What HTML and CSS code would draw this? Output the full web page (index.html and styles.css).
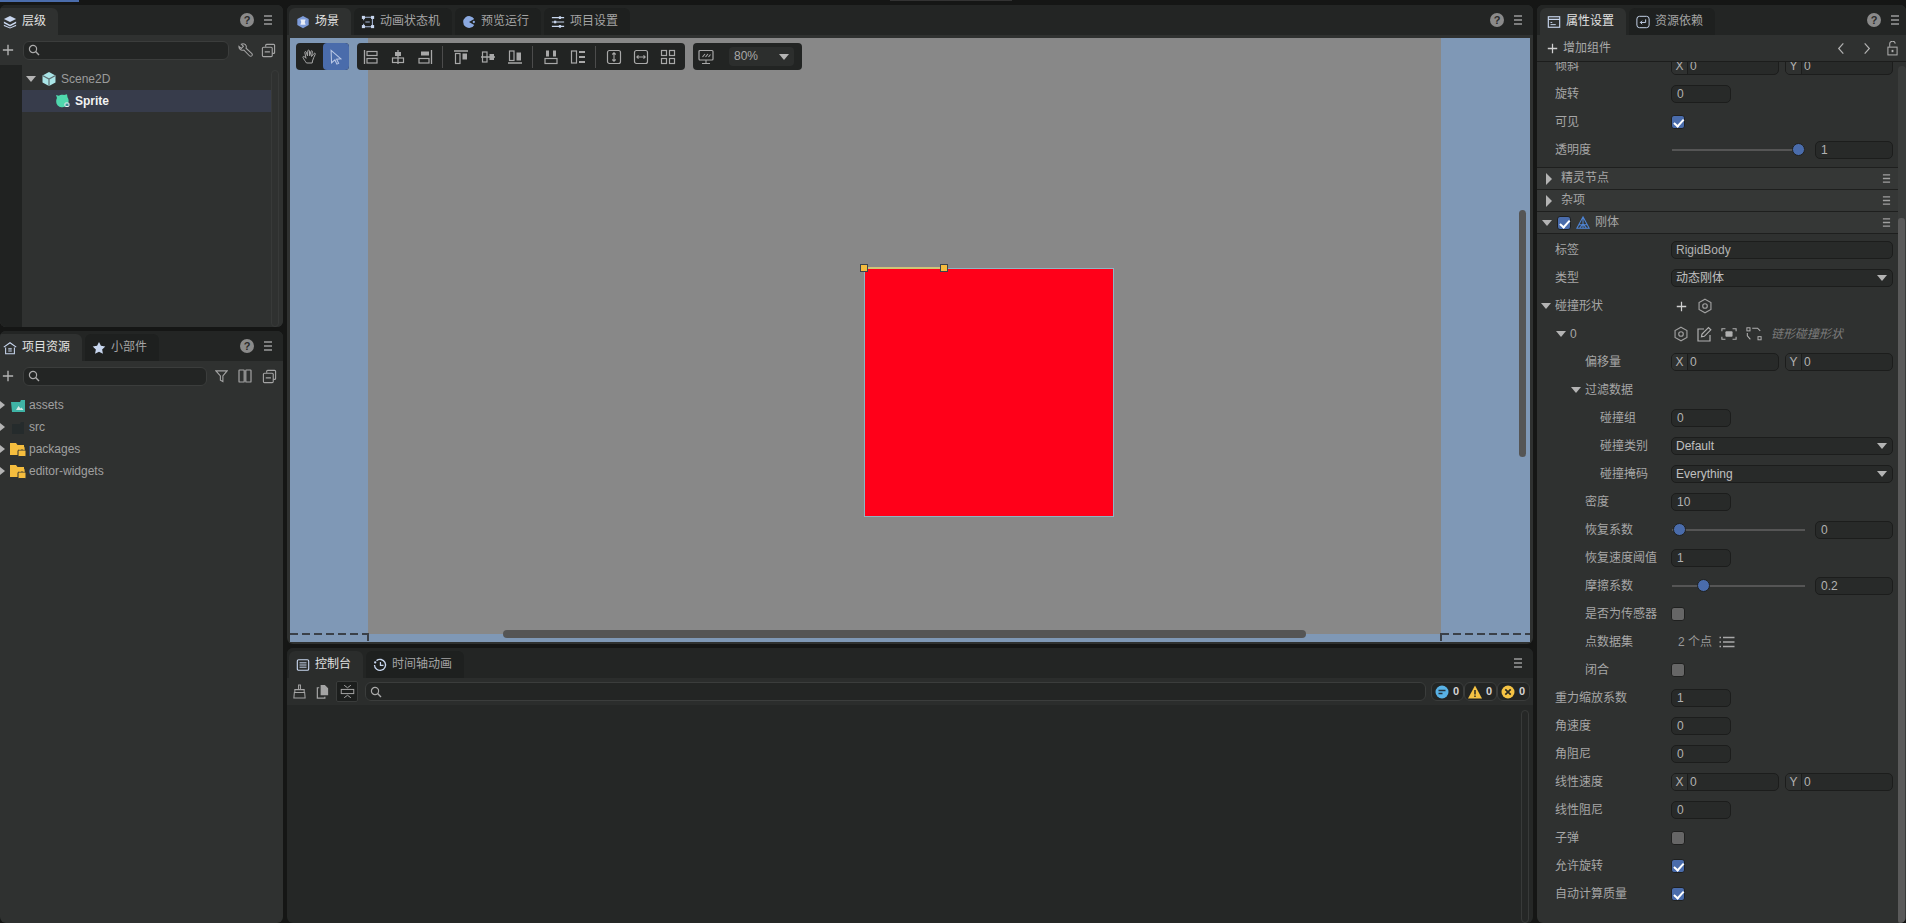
FILE: index.html
```html
<!DOCTYPE html>
<html lang="zh">
<head>
<meta charset="utf-8">
<title>LayaAir IDE</title>
<link rel="stylesheet" href="styles.css">
</head>
<body>
<svg class="defs" aria-hidden="true">
  <defs>
    <symbol id="menu" viewBox="0 0 10 12"><path d="M1 2h8M1 6h8M1 10h8" stroke-width="1.6"/></symbol>
    <symbol id="plus" viewBox="0 0 14 14"><path d="M7 1v12M1 7h12" stroke-width="1.6"/></symbol>
    <symbol id="search" viewBox="0 0 12 12"><circle cx="5" cy="5" r="3.6" stroke-width="1.2"/><path d="M7.6 7.6l3.4 3.4" stroke-width="1.4"/></symbol>
    <symbol id="wrench" viewBox="0 0 16 16"><path d="M1 3.500L3.500 5.800 5.800 3.500 3.500 1.200C5.500.2 8 1 8.700 3c.3.900.2 1.800-.1 2.600l6 5.400c.8.800.8 1.800.2 2.600-.7.800-1.800.8-2.600 0L6.300 7.500C4.800 8 3.100 7.700 2 6.500 1.200 5.600.9 4.500 1 3.500z" stroke-width="1.100"/></symbol>
    <symbol id="collapse" viewBox="0 0 16 16"><path d="M5 4V2.500A1 1 0 0 1 6 1.500h7.500a1 1 0 0 1 1 1V10a1 1 0 0 1-1 1H12" stroke-width="1.200"/><rect x="1.500" y="4.500" width="10.500" height="10" rx="1.200" stroke-width="1.200"/><path d="M4 9.500h5.500" stroke-width="1.200"/></symbol>
    <symbol id="filter" viewBox="0 0 14 14"><path d="M1 1.500h12L8.500 7v6L5.800 11.500V7z" stroke-width="1.200"/></symbol>
    <symbol id="cols" viewBox="0 0 14 14"><rect x="1" y="1" width="5.200" height="12" rx=".6" stroke-width="1.200"/><rect x="7.800" y="1" width="5.200" height="12" rx=".6" stroke-width="1.200"/></symbol>
    <symbol id="cube" viewBox="0 0 16 16"><path class="solid-mint" d="M8 1l6.500 3.500v7L8 15l-6.500-3.500v-7z"/><path d="M1.500 4.500L8 8l6.500-3.500M8 8v7" stroke="#5d6e70" stroke-width="1.200"/></symbol>
    <symbol id="sprite" viewBox="0 0 16 16"><path class="solid-green" d="M1 2l3 .8C5 2 7 1.600 9 2l3-.8.5 3c1.500 2 1.500 5 .2 7-1.200 2-3.700 3.300-6.200 3C3.500 14 1.200 11.500 1.200 8.500c0-1.500.3-2.500.8-3.500z"/><rect x="10" y="10" width="4" height="3.500" rx=".8" fill="#3d8f98"/></symbol>
    <symbol id="hex" viewBox="0 0 14 14"><path d="M7 1l5.200 3v6L7 13l-5.200-3V4z" stroke-width="1"/><circle cx="7" cy="7" r="2" stroke-width="1"/></symbol>
    <symbol id="edit" viewBox="0 0 16 16"><path d="M8 3H2v12h12V9" stroke-width="1.200"/><path d="M5.500 10.800L6 8l6.500-6.500 2.300 2.300L8.300 10.300z" stroke-width="1.200"/></symbol>
    <symbol id="frame" viewBox="0 0 18 16"><path d="M1 5V2h4M13 2h4v3M17 11v3h-4M5 14H1v-3" stroke-width="1.200"/><rect x="5" y="5" width="8" height="6" rx="1" class="solid-cur"/></symbol>
    <symbol id="nodes" viewBox="0 0 18 16"><rect x="1" y="1" width="3.500" height="3.500" stroke-width="1.100"/><rect x="13.500" y="11" width="3.500" height="3.500" stroke-width="1.100"/><path d="M7 1.500h6l3 3M1.500 7v3l3 3.500h.5" stroke-width="1.200"/></symbol>
    <symbol id="list" viewBox="0 0 16 12"><path d="M4 1.500h11.500M4 6h11.500M4 10.500h11.500M.5 1.500h1.500M.5 6h1.500M.5 10.500h1.500" stroke-width="1.500"/></symbol>
    <symbol id="lock" viewBox="0 0 12 16"><path d="M3 6V3.500a3 3 0 0 1 6-.8" stroke-width="1.100"/><rect x="1" y="6.500" width="10" height="8.500" stroke-width="1.100"/><rect x="5" y="9.500" width="2" height="2.500" class="solid-cur"/></symbol>
    <symbol id="left" viewBox="0 0 8 14"><path d="M6.500 1.500L1.500 7l5 5.500" stroke-width="1.300"/></symbol>
    <symbol id="right" viewBox="0 0 8 14"><path d="M1.500 1.500l5 5.500-5 5.500" stroke-width="1.300"/></symbol>
    <symbol id="hand" viewBox="0 0 16 16"><path d="M4.500 14c-1-1.500-3-4-3.500-5.500-.3-1 .8-1.500 1.500-.8L4 9.300 2.800 3.500c-.2-1 1.200-1.400 1.500-.3L5.500 7 5.800 1.800c.1-1 1.500-1 1.600 0l.3 5L9 2.300c.3-1 1.600-.6 1.400.4L9.500 7.500l2.500-3c.7-.8 1.800 0 1.200.9-1 2-2 4-2.700 6.600L10.200 14z" stroke-width="1"/></symbol>
    <symbol id="arrow" viewBox="0 0 16 18"><path d="M2.500 1.500l11 9.500-4.800.5L11 16l-2 1-2.200-4.700L3 15.500z" stroke-width="1.200"/></symbol>
    <symbol id="a1" viewBox="0 0 16 16"><path d="M1.500 1v14" stroke-width="1.300"/><rect x="4" y="2.500" width="10" height="4" stroke-width="1.200"/><rect x="4" y="9.500" width="10" height="4.500" stroke-width="1.200"/></symbol>
    <symbol id="a2" viewBox="0 0 16 16"><path d="M8 1v14" stroke-width="1.300"/><rect x="5" y="3" width="6" height="4" class="solid-cur"/><rect x="2.500" y="9" width="11" height="4.500" stroke-width="1.200"/></symbol>
    <symbol id="a3" viewBox="0 0 16 16"><path d="M14.500 1v14" stroke-width="1.300"/><rect x="4" y="2.500" width="8" height="4" class="solid-cur"/><rect x="2" y="9.500" width="10" height="4.500" stroke-width="1.200"/></symbol>
    <symbol id="a4" viewBox="0 0 16 16"><path d="M1 2h14" stroke-width="1.300"/><rect x="2.500" y="4.500" width="4.500" height="10" stroke-width="1.200"/><rect x="9.500" y="4.500" width="4.500" height="6" class="solid-cur"/></symbol>
    <symbol id="a5" viewBox="0 0 16 16"><path d="M1 8h14" stroke-width="1.300"/><rect x="2.500" y="3" width="4.500" height="10" stroke-width="1.200"/><rect x="9.500" y="5" width="4.500" height="6" class="solid-cur"/></symbol>
    <symbol id="a6" viewBox="0 0 16 16"><path d="M1 14h14" stroke-width="1.300"/><rect x="2.500" y="2" width="4.500" height="9.500" stroke-width="1.200"/><rect x="9.500" y="3.500" width="4.500" height="8" class="solid-cur"/></symbol>
    <symbol id="a7" viewBox="0 0 16 16"><rect x="2" y="9.500" width="12" height="5" stroke-width="1.200"/><path d="M3 1v6h3V1M10 1v6h3V1" stroke-width="0"/><rect x="3" y="1.500" width="3" height="6" class="solid-cur"/><rect x="10" y="1.500" width="3" height="6" class="solid-cur"/></symbol>
    <symbol id="a8" viewBox="0 0 16 16"><rect x="1.500" y="2" width="5" height="12" stroke-width="1.200"/><path d="M9 3h6M9 8h6M9 13h6" stroke-width="2"/></symbol>
    <symbol id="a9" viewBox="0 0 16 16"><rect x="1.500" y="1.500" width="13" height="13" rx="2" stroke-width="1.200"/><path d="M8 4v8M6.300 5.500L8 3.800l1.700 1.700M6.300 10.500L8 12.200l1.700-1.700" stroke-width="1.100"/></symbol>
    <symbol id="a10" viewBox="0 0 16 16"><rect x="1.500" y="1.500" width="13" height="13" rx="2" stroke-width="1.200"/><path d="M4 8h8M5.500 6.300L3.800 8l1.700 1.700M10.500 6.300L12.200 8l-1.700 1.700" stroke-width="1.100"/></symbol>
    <symbol id="a11" viewBox="0 0 16 16"><rect x="1.500" y="1.500" width="5" height="5" stroke-width="1.200"/><rect x="9.500" y="1.500" width="5" height="5" stroke-width="1.200"/><rect x="1.500" y="9.500" width="5" height="5" stroke-width="1.200"/><rect x="9.500" y="9.500" width="5" height="5" stroke-width="1.200"/></symbol>
    <symbol id="monitor" viewBox="0 0 16 16"><rect x="1" y="1.500" width="14" height="9.500" rx="1" stroke-width="1.200"/><path d="M8 11v3M4 14.500h8M4.500 8l2.500-3M7.500 8L10 5M10.500 8l2-2.500" stroke-width="1.100"/></symbol>
    <symbol id="broom" viewBox="0 0 16 16"><path d="M7 1h2v5H7zM3 6h10v3H3zM2.500 9h11l.5 6H2z" stroke-width="1.100"/></symbol>
    <symbol id="doc" viewBox="0 0 14 16"><path class="solid-cur" d="M5 1h4.500L13 4.500V12H5z"/><path d="M3.500 4H1.500v11h8v-1.500" stroke-width="1.300"/></symbol>
    <symbol id="fit" viewBox="0 0 18 18"><rect x="1.500" y="6.500" width="15" height="5" stroke-width="1.200"/><path d="M5 1.500L9 4.500l4-3M5 16.500l4-3 4 3" stroke-width="1.200"/></symbol>
  </defs>
</svg>

<div class="topstrip"><div class="topstrip-mark"></div><div class="topstrip-tab"></div></div>

<div class="app">
  <div class="col">
    <section class="panel hierarchy">
      <header class="tabbar flush">
        <div class="tab active">
          <svg class="tabicon" viewBox="0 0 16 16"><path class="solid-pale" d="M8 1l7 3.500L8 8 1 4.500z"/><path class="solid-pale" d="M1 7.500L8 11l7-3.500v1.800L8 13 1 9.300zM1 11l7 3.300L15 11v1.500L8 15.500 1 12.500z"/></svg>
          <span>层级</span>
        </div>
        <div class="tab-tools">
          <span class="help">?</span>
          <svg class="ic menu"><use href="#menu"/></svg>
        </div>
      </header>
      <div class="toolbar">
        <svg class="ic add"><use href="#plus"/></svg>
        <div class="search grow"><svg class="ic mag"><use href="#search"/></svg></div>
        <svg class="ic tool first"><use href="#wrench"/></svg>
        <svg class="ic tool"><use href="#collapse"/></svg>
      </div>
      <div class="tree-area">
        <div class="gutter"></div>
        <div class="tree">
          <div class="node scene-node">
            <i class="caret down"></i>
            <svg class="ic node-ic"><use href="#cube"/></svg>
            <span>Scene2D</span>
          </div>
          <div class="node sprite-node">
            <svg class="ic node-ic"><use href="#sprite"/></svg>
            <span>Sprite</span>
          </div>
        </div>
        <div class="track"></div>
      </div>
    </section>

    <section class="panel assets">
      <header class="tabbar flush">
        <div class="tab active">
          <svg class="tabicon" viewBox="0 0 16 16"><path class="solid-pale" d="M8 1l7.500 5.500-.8 1L8 2.800 1.300 7.500l-.8-1z"/><path d="M3 7.500v7h10v-7M3 14.500h10M6 9h4M6 11.500h4" stroke="#c8d6ee" stroke-width="1.200" fill="none"/></svg>
          <span>项目资源</span>
        </div>
        <div class="tab">
          <svg class="tabicon" viewBox="0 0 16 16"><path class="solid-pale" d="M8 1l2.200 4.500 5 .7-3.600 3.500.9 5L8 12.300 3.500 14.700l.9-5L.8 6.200l5-.7z"/></svg>
          <span>小部件</span>
        </div>
        <div class="tab-tools">
          <span class="help">?</span>
          <svg class="ic menu"><use href="#menu"/></svg>
        </div>
      </header>
      <div class="toolbar assets-bar">
        <svg class="ic add"><use href="#plus"/></svg>
        <div class="search grow"><svg class="ic mag"><use href="#search"/></svg></div>
        <svg class="ic tool small"><use href="#filter"/></svg>
        <svg class="ic tool cols"><use href="#cols"/></svg>
        <svg class="ic tool wide-gap"><use href="#collapse"/></svg>
      </div>
      <div class="files">
        <div class="file"><i class="caret side"></i>
          <svg class="file-ic" viewBox="0 0 16 16"><path fill="#3fb4a6" d="M1 5h9l1-2h4v12H2z"/><path fill="#cfe9e4" d="M6 13l2.500-4 2 2.500 1-1 2 2.500z"/></svg>
          <span>assets</span></div>
        <div class="file"><i class="caret side"></i>
          <svg class="file-ic" viewBox="0 0 16 16"><path fill="#252b2c" d="M2 5h8l1-2h3v12H2z"/></svg>
          <span>src</span></div>
        <div class="file"><i class="caret side"></i>
          <svg class="file-ic" viewBox="0 0 16 16"><path fill="#f5bd3e" d="M0 2h6l1.500 2H14v10H0z"/><rect x="8" y="9" width="8" height="6.500" rx="1" fill="#f5bd3e" stroke="#2f3130"/><path d="M10 9V7.500a2 2 0 0 1 4 0V9" stroke="#f5bd3e" fill="none" stroke-width="1.300"/></svg>
          <span>packages</span></div>
        <div class="file"><i class="caret side"></i>
          <svg class="file-ic" viewBox="0 0 16 16"><path fill="#f5bd3e" d="M0 2h6l1.500 2H14v10H0z"/><rect x="8" y="9" width="8" height="6.500" rx="1" fill="#f5bd3e" stroke="#2f3130"/><path d="M10 9V7.500a2 2 0 0 1 4 0V9" stroke="#f5bd3e" fill="none" stroke-width="1.300"/></svg>
          <span>editor-widgets</span></div>
      </div>
    </section>
  </div>

  <div class="col">
    <section class="panel scene">
      <header class="tabbar">
        <div class="tab active">
          <svg class="tabicon" viewBox="0 0 16 16"><path fill="#7d9bd8" d="M8 1l6.500 3.500v7L8 15l-6.500-3.500v-7z"/><path fill="#e8edf6" d="M5 5h6l-1 3 1 3H5l1-3z"/></svg>
          <span>场景</span>
        </div>
        <div class="tab">
          <svg class="tabicon" viewBox="0 0 16 16"><path d="M3 2.500h10M3 13.500h10M13 3v10M3 3v3M3 10v3M5 8h5" stroke="#a8b8d8" stroke-width="1.200" fill="none"/><rect x="1" y="1" width="3.500" height="3.500" fill="#c8d6ee"/><rect x="11.500" y="1" width="3.500" height="3.500" fill="#c8d6ee"/><rect x="1" y="11.500" width="3.500" height="3.500" fill="#c8d6ee"/><rect x="11.500" y="11.500" width="3.500" height="3.500" fill="#c8d6ee"/></svg>
          <span>动画状态机</span>
        </div>
        <div class="tab">
          <svg class="tabicon" viewBox="0 0 16 16"><path fill="#8ba9e0" d="M14 4.500A6.800 6.800 0 1 0 14 11.500L8 8z"/><circle cx="13.500" cy="8" r="1.300" fill="#8ba9e0"/></svg>
          <span>预览运行</span>
        </div>
        <div class="tab">
          <svg class="tabicon" viewBox="0 0 16 16"><path d="M1 3h14M1 8h14M1 13h14" stroke="#c8d6ee" stroke-width="1.300"/><rect x="9" y="1.500" width="2.500" height="3" fill="#c8d6ee"/><rect x="3.500" y="6.500" width="2.500" height="3" fill="#c8d6ee"/><rect x="9" y="11.500" width="2.500" height="3" fill="#c8d6ee"/></svg>
          <span>项目设置</span>
        </div>
        <div class="tab-tools">
          <span class="help">?</span>
          <svg class="ic menu"><use href="#menu"/></svg>
        </div>
      </header>
      <div class="viewport">
        <div class="stage"></div>
        <div class="sprite-box"></div>
        <div class="sel-line"></div>
        <span class="handle h1"></span>
        <span class="handle h2"></span>
        <div class="dash d-left"></div>
        <div class="dash d-right"></div>
        <div class="vthumb"></div>
        <div class="hthumb"></div>
        <div class="scene-tools">
          <div class="tgroup pick">
            <span class="tbtn"><svg class="ic ti"><use href="#hand"/></svg></span>
            <span class="tbtn on"><svg class="ic ti"><use href="#arrow"/></svg></span>
          </div>
          <div class="tgroup aligns">
            <span class="tbtn"><svg class="ic ti"><use href="#a1"/></svg></span>
            <span class="tbtn"><svg class="ic ti"><use href="#a2"/></svg></span>
            <span class="tbtn"><svg class="ic ti"><use href="#a3"/></svg></span>
            <i class="tsep"></i>
            <span class="tbtn"><svg class="ic ti"><use href="#a4"/></svg></span>
            <span class="tbtn"><svg class="ic ti"><use href="#a5"/></svg></span>
            <span class="tbtn"><svg class="ic ti"><use href="#a6"/></svg></span>
            <i class="tsep"></i>
            <span class="tbtn"><svg class="ic ti"><use href="#a7"/></svg></span>
            <span class="tbtn"><svg class="ic ti"><use href="#a8"/></svg></span>
            <i class="tsep"></i>
            <span class="tbtn"><svg class="ic ti"><use href="#a9"/></svg></span>
            <span class="tbtn"><svg class="ic ti"><use href="#a10"/></svg></span>
            <span class="tbtn"><svg class="ic ti"><use href="#a11"/></svg></span>
          </div>
          <div class="tgroup zoom">
            <span class="tbtn"><svg class="ic ti"><use href="#monitor"/></svg></span>
            <div class="zoom-select"><span>80%</span><i class="caret down big"></i></div>
          </div>
        </div>
      </div>
    </section>

    <section class="panel console">
      <header class="tabbar">
        <div class="tab active">
          <svg class="tabicon" viewBox="0 0 16 16"><rect x="1.500" y="2" width="13" height="12" rx="1.500" stroke="#c8d6ee" stroke-width="1.300" fill="none"/><path d="M4 5.500h8M4 8h8M4 10.500h8" stroke="#c8d6ee" stroke-width="1.100"/></svg>
          <span>控制台</span>
        </div>
        <div class="tab">
          <svg class="tabicon" viewBox="0 0 16 16"><path d="M4 3a6.300 6.300 0 1 1-2.300 5" stroke="#c8d6ee" stroke-width="1.500" fill="none"/><path d="M8.500 4.500V8.500H12" stroke="#c8d6ee" stroke-width="1.400" fill="none"/><circle cx="2.500" cy="5" r="1.300" fill="#c8d6ee"/></svg>
          <span>时间轴动画</span>
        </div>
        <div class="tab-tools">
          <svg class="ic menu"><use href="#menu"/></svg>
        </div>
      </header>
      <div class="console-bar">
        <svg class="ic cbtn"><use href="#broom"/></svg>
        <svg class="ic cbtn doc"><use href="#doc"/></svg>
        <span class="ctoggle"><svg class="ic cbtn"><use href="#fit"/></svg></span>
        <div class="search grow"><svg class="ic mag"><use href="#search"/></svg></div>
        <div class="badges">
          <span class="badge"><svg viewBox="0 0 14 14" class="badge-ic"><circle cx="7" cy="7" r="6.500" fill="#58b2e6"/><path d="M3.500 5.500h7M3.500 8.500h4" stroke="#26333c" stroke-width="1.500"/></svg>0</span>
          <span class="badge"><svg viewBox="0 0 14 14" class="badge-ic"><path d="M7 .5L14 13.500H0z" fill="#f5c344"/><path d="M7 5v4.500M7 10.500v1.500" stroke="#2a2a22" stroke-width="1.500"/></svg>0</span>
          <span class="badge"><svg viewBox="0 0 14 14" class="badge-ic"><circle cx="7" cy="7" r="6.500" fill="#f5c344"/><path d="M4.300 4.300l5.400 5.400M9.700 4.300l-5.400 5.400" stroke="#2a2a22" stroke-width="1.700"/></svg>0</span>
        </div>
      </div>
      <div class="console-body"><div class="track"></div></div>
    </section>
  </div>

  <section class="panel inspector">
    <header class="tabbar">
      <div class="tab active">
        <svg class="tabicon" viewBox="0 0 16 16"><rect x="1.500" y="2" width="13" height="12" stroke="#c8d6ee" stroke-width="1.300" fill="none"/><path d="M1.500 5h13" stroke="#c8d6ee" stroke-width="1.500"/><path d="M4 8.500h2M4 11h6" stroke="#c8d6ee" stroke-width="1.100"/></svg>
        <span>属性设置</span>
      </div>
      <div class="tab">
        <svg class="tabicon" viewBox="0 0 16 16"><rect x="1" y="1.500" width="14" height="13" rx="3" stroke="#c8d6ee" stroke-width="1.100" fill="none"/><path d="M11 5v3.500H5M7 6.500L5 8.500l2 2" stroke="#c8d6ee" stroke-width="1.100" fill="none"/></svg>
        <span>资源依赖</span>
      </div>
      <div class="tab-tools">
        <span class="help">?</span>
        <svg class="ic menu"><use href="#menu"/></svg>
      </div>
    </header>
    <div class="addbar">
      <svg class="ic addc"><use href="#plus"/></svg>
      <span class="addtext">增加组件</span>
      <span class="spacer"></span>
      <svg class="ic nav"><use href="#left"/></svg>
      <svg class="ic nav nav-r"><use href="#right"/></svg>
      <svg class="ic navlock"><use href="#lock"/></svg>
    </div>
    <div class="props">
      <div class="proplist">
        <div class="row"><span class="lbl">倾斜</span><div class="field xy"><b>X</b><span>0</span></div><div class="field xy"><b>Y</b><span>0</span></div></div>
        <div class="row"><span class="lbl">旋转</span><div class="field short">0</div></div>
        <div class="row"><span class="lbl">可见</span><i class="check on"></i></div>
        <div class="row"><span class="lbl">透明度</span><div class="slider" style="--v:1"><i></i></div><div class="field num">1</div></div>

        <div class="section first"><i class="caret side big"></i><span>精灵节点</span><svg class="ic sec-menu"><use href="#menu"/></svg></div>
        <div class="section"><i class="caret side big"></i><span>杂项</span><svg class="ic sec-menu"><use href="#menu"/></svg></div>
        <div class="section body-sec"><i class="caret down big"></i><i class="check on"></i>
          <svg class="sec-ic" viewBox="0 0 16 16"><path d="M8 1L1 14h14zM8 1v13M4 14l4-5 4 5M3 10h10" stroke="#4f86d8" stroke-width="1.200" fill="none"/></svg>
          <span>刚体</span><svg class="ic sec-menu"><use href="#menu"/></svg></div>

        <div class="row pushed"><span class="lbl">标签</span><div class="field wide">RigidBody</div></div>
        <div class="row"><span class="lbl">类型</span><div class="field wide select">动态刚体<i class="caret down big"></i></div></div>
        <div class="row"><span class="lbl"><i class="caret down"></i>碰撞形状</span>
          <svg class="ic ri plusi"><use href="#plus"/></svg><svg class="ic ri hexi"><use href="#hex"/></svg></div>
        <div class="row"><span class="lbl l-zero"><i class="caret down"></i>0</span>
          <svg class="ic ri ri-first hexi"><use href="#hex"/></svg><svg class="ic ri"><use href="#edit"/></svg><svg class="ic ri"><use href="#frame"/></svg><svg class="ic ri"><use href="#nodes"/></svg>
          <em class="shape">链形碰撞形状</em></div>
        <div class="row"><span class="lbl l1">偏移量</span><div class="field xy"><b>X</b><span>0</span></div><div class="field xy"><b>Y</b><span>0</span></div></div>
        <div class="row"><span class="lbl l1"><i class="caret down"></i>过滤数据</span></div>
        <div class="row"><span class="lbl l2">碰撞组</span><div class="field short">0</div></div>
        <div class="row"><span class="lbl l2">碰撞类别</span><div class="field wide select">Default<i class="caret down big"></i></div></div>
        <div class="row"><span class="lbl l2">碰撞掩码</span><div class="field wide select">Everything<i class="caret down big"></i></div></div>
        <div class="row"><span class="lbl l1">密度</span><div class="field short">10</div></div>
        <div class="row"><span class="lbl l1">恢复系数</span><div class="slider" style="--v:0"><i></i></div><div class="field num">0</div></div>
        <div class="row"><span class="lbl l1">恢复速度阈值</span><div class="field short">1</div></div>
        <div class="row"><span class="lbl l1">摩擦系数</span><div class="slider" style="--v:.2"><i></i></div><div class="field num">0.2</div></div>
        <div class="row"><span class="lbl l1">是否为传感器</span><i class="check"></i></div>
        <div class="row"><span class="lbl l1">点数据集</span><span class="count">2 个点</span><svg class="ic listi"><use href="#list"/></svg></div>
        <div class="row"><span class="lbl l1">闭合</span><i class="check"></i></div>
        <div class="row"><span class="lbl">重力缩放系数</span><div class="field short">1</div></div>
        <div class="row"><span class="lbl">角速度</span><div class="field short">0</div></div>
        <div class="row"><span class="lbl">角阻尼</span><div class="field short">0</div></div>
        <div class="row"><span class="lbl">线性速度</span><div class="field xy"><b>X</b><span>0</span></div><div class="field xy"><b>Y</b><span>0</span></div></div>
        <div class="row"><span class="lbl">线性阻尼</span><div class="field short">0</div></div>
        <div class="row"><span class="lbl">子弹</span><i class="check"></i></div>
        <div class="row"><span class="lbl">允许旋转</span><i class="check on"></i></div>
        <div class="row"><span class="lbl">自动计算质量</span><i class="check on"></i></div>
      </div>
      <div class="inspect-scroll"><div class="inspect-thumb"></div></div>
    </div>
  </section>
</div>
</body>
</html>
```

FILE: styles.css
```css
* { box-sizing: border-box; }
html, body { margin: 0; height: 100%; }
body {
  width: 1906px;
  height: 923px;
  overflow: hidden;
  background: #151615;
  color: #a9a9a9;
  font: 12px/1.2 "Liberation Sans", "Noto Sans CJK SC", sans-serif;
  display: flex;
  flex-direction: column;
}
i, em { display: block; }
.defs { width: 0; height: 0; position: absolute; }
symbol, .ic { fill: none; stroke: currentColor; }
.solid-cur { fill: currentColor; stroke: none; }
.solid-mint { fill: #a9e4e6; stroke: none; }
.solid-green { fill: #4fd8ae; stroke: none; }
.solid-pale { fill: #c8d6ee; stroke: none; }
.ic { flex: none; }

.topstrip { height: 5px; flex: none; display: flex; }
.topstrip-mark { width: 79px; height: 2px; background: #4a6cab; }
.topstrip-tab { width: 122px; height: 1px; margin-left: 811px; background: #333; }

.app {
  flex: 1;
  min-height: 0;
  display: grid;
  grid-template-columns: 283px 1246px 369px;
  column-gap: 4px;
}
.col { display: flex; flex-direction: column; gap: 4px; min-height: 0; }

.panel {
  background: #2f3130;
  border-radius: 6px;
  display: flex;
  flex-direction: column;
  overflow: hidden;
  min-height: 0;
}
.hierarchy { height: 322px; flex: none; }
.assets { flex: 1; }
.scene { height: 639px; flex: none; }
.console { flex: 1; background: #252726; }
.inspector { background: #2f3130; }

.tabbar {
  height: 30px;
  flex: none;
  padding: 3px 0 0 2px;
  background: #232524;
  display: flex;
  gap: 3px;
}
.tabbar.flush { padding-left: 0; margin-left: -4px; }
.inspector .tabbar { padding-left: 3px; }
.inspector .tab-tools { padding-right: 6px; }
.tab {
  height: 27px;
  display: flex;
  align-items: center;
  gap: 5px;
  padding: 0 12px 0 7px;
  background: #1e201f;
  color: #a4a4a4;
  border-radius: 6px 6px 0 0;
}
.tab.active { background: #2f3130; color: #e2e2e2; }
.console .tab.active { background: #2b2d2c; }
.tabicon { width: 14px; height: 14px; flex: none; }
.tab-tools {
  margin-left: auto;
  display: flex;
  align-items: center;
  gap: 9px;
  padding: 0 10px 3px 0;
}
.help {
  width: 14px;
  height: 14px;
  border-radius: 50%;
  background: #8a8a8a;
  color: #2b2b2b;
  font-weight: 700;
  font-size: 11px;
  line-height: 14px;
  text-align: center;
}
.menu { width: 10px; height: 12px; color: #9a9a9a; }

.toolbar {
  height: 30px;
  flex: none;
  display: flex;
  align-items: center;
  padding: 0 7px 0 2px;
  color: #a4a4a4;
}
.assets-bar { padding-right: 6px; }
.add { width: 12px; height: 12px; margin-right: 9px; color: #b4b4b4; }
.search {
  height: 19px;
  background: #232524;
  border: 1px solid #3b3d3c;
  border-radius: 6px;
  display: flex;
  align-items: center;
  padding-left: 4px;
}
.grow { flex: 1; min-width: 0; }
.mag { width: 12px; height: 12px; color: #aaa; }
.tool { width: 15px; height: 15px; margin-left: 8px; }
.tool.first { margin-left: 9px; }
.tool.small { width: 13px; height: 14px; }
.tool.cols { width: 14px; height: 14px; margin-left: 10px; }
.tool.wide-gap { margin-left: 10px; }

.tree-area { flex: 1; display: flex; min-height: 0; background: #2f3130; }
.gutter { width: 22px; flex: none; background: #202221; }
.tree { flex: 1; padding-top: 3px; }
.node { height: 22px; display: flex; align-items: center; gap: 4px; }
.scene-node { padding-left: 4px; color: #9b9b9b; }
.scene-node .caret { margin-right: 1px; }
.sprite-node {
  background: #373c4b;
  padding-left: 33px;
  color: #f2f2f2;
  font-weight: 700;
}
.node-ic { width: 16px; height: 16px; }
.track {
  width: 8px;
  margin: 5px 4px 0 0;
  flex: none;
  border: 1px solid #383a39;
  border-radius: 4px;
}

.caret { width: 0; height: 0; border-style: solid; flex: none; }
.caret.down { border-width: 6px 5px 0; border-color: #b4b4b4 transparent transparent; }
.caret.side { border-width: 4px 0 4px 5px; border-color: transparent transparent transparent #b4b4b4; }
.caret.down.big { border-width: 6px 5px 0; }
.caret.side.big { border-width: 6px 0 6px 6px; }

.files { padding-top: 3px; }
.file { height: 22px; display: flex; align-items: center; color: #a0a0a0; }
.file .caret { margin-right: 5px; }
.file-ic { width: 16px; height: 16px; margin-right: 3px; flex: none; }

.viewport { flex: 1; position: relative; margin: 3px 3px 2px 3px; background: #7f98b6; overflow: hidden; }
.stage { position: absolute; left: 78px; top: 0; width: 1073px; height: 596px; background: #888; }
.sprite-box { position: absolute; left: 574px; top: 230px; width: 250px; height: 249px; background: #ff0019; border: 1px solid #8fb4c2; }
.sel-line { position: absolute; left: 574px; top: 229px; width: 78px; height: 2px; background: #d0c478; }
.handle { position: absolute; width: 8px; height: 8px; top: 226px; background: #f5bd3e; border: 1px solid #3a444c; }
.h1 { left: 570px; }
.h2 { left: 650px; }
.dash { position: absolute; top: 595px; height: 2px; background: repeating-linear-gradient(90deg, #3a4048 0 8px, transparent 8px 12px); }
.d-left { left: 0; width: 78px; }
.d-right { left: 1151px; width: 89px; }
.d-left::after, .d-right::before { content: ""; position: absolute; top: 0; width: 2px; height: 8px; background: #3a4048; }
.d-left::after { right: -1px; }
.d-right::before { left: -1px; }
.vthumb { position: absolute; left: 1229px; top: 172px; width: 7px; height: 247px; border-radius: 4px; background: #555; }
.hthumb { position: absolute; left: 213px; top: 592px; width: 803px; height: 8px; border-radius: 4px; background: #555; }
.scene-tools { position: absolute; left: 6px; top: 5px; display: flex; gap: 8px; }
.tgroup { height: 27px; background: #222423; border-radius: 4px; display: flex; align-items: center; color: #a8a8a8; }
.tbtn { width: 27px; height: 27px; display: flex; align-items: center; justify-content: center; flex: none; }
.pick { width: 53px; }
.pick .tbtn { width: 26px; }
.pick .tbtn:first-child { margin-left: 1px; }
.aligns { padding-right: 4px; }
.tbtn.on { background: #4a6cab; border-radius: 4px; color: #b8c6e4; }
.ti { width: 16px; height: 16px; }
.tsep { width: 1px; height: 22px; background: #4c4c4c; margin: 0 4px; }
.zoom { width: 109px; }
.zoom .tbtn { width: 26px; }
.zoom-select { margin-left: 10px; width: 65px; height: 19px; background: #2c2e2d; border-radius: 4px; display: flex; align-items: center; justify-content: space-between; padding: 0 5px; }

.console-bar { height: 27px; flex: none; background: #2b2d2c; display: flex; align-items: center; padding: 0 3px 0 5px; color: #a4a4a4; }
.cbtn { width: 15px; height: 15px; margin-right: 8px; }
.cbtn.doc { margin-right: 6px; }
.ctoggle { width: 22px; height: 21px; background: #1c1e1d; border: 1px solid #3a3c3b; border-radius: 2px; display: flex; align-items: center; justify-content: center; margin-right: 7px; }
.ctoggle .cbtn { margin: 0; }
.badges { display: flex; margin-left: 5px; }
.badge { height: 19px; width: 33px; border: 1px solid #3b3d3c; border-radius: 6px; background: #232524; display: flex; align-items: center; gap: 4px; padding-left: 3px; color: #d4d4d4; font-weight: 700; font-size: 11px; }
.badge-ic { width: 14px; height: 14px; flex: none; }
.console-body { flex: 1; display: flex; justify-content: flex-end; min-height: 0; }

.addbar { height: 27px; flex: none; display: flex; align-items: center; border-bottom: 1px solid #1c1d1c; padding: 1px 8px 0 10px; background: #2f3130; color: #b0b0b0; }
.addc { width: 11px; height: 11px; margin-right: 5px; color: #d0d0d0; }
.addtext { color: #a8a8a8; }
.spacer { flex: 1; }
.nav { width: 8px; height: 13px; margin-right: 18px; }
.nav-r { margin-right: 16px; }
.navlock { width: 11px; height: 15px; }

.props { flex: 1; min-height: 0; display: flex; overflow: hidden; }
.proplist { flex: 1; margin-top: -10px; min-width: 0; }
.inspect-scroll { width: 8px; flex: none; margin-top: 4px; background: #3a3c3b; border-radius: 4px 4px 0 0; position: relative; }
.inspect-thumb { position: absolute; left: 0; right: 1px; top: 152px; bottom: 0; background: #5a5a5a; border-radius: 3px; }

.row { height: 28px; display: flex; align-items: center; padding-right: 5px; }
.row.pushed { margin-top: 2px; }
.lbl { width: 134px; padding-left: 18px; flex: none; display: flex; align-items: center; color: #a6a6a6; }
.lbl .caret { margin-left: -14px; margin-right: 4px; }
.l-zero { padding-left: 33px; }
.l1 { padding-left: 48px; }
.l2 { padding-left: 63px; }
.field {
  height: 18px;
  background: #282a29;
  border: 1px solid #1c1d1c;
  border-radius: 5px;
  display: flex;
  align-items: center;
  padding-left: 4px;
  color: #b2b2b2;
  flex: none;
}
.short { width: 60px; padding-left: 5px; }
.wide { width: 222px; }
.num { width: 78px; margin-left: 10px; padding-left: 5px; }
.xy { width: 108px; padding-left: 0; overflow: hidden; }
.xy + .xy { margin-left: 6px; }
.xy b { width: 16px; height: 100%; display: flex; align-items: center; justify-content: center; font-weight: 400; border-right: 1px solid #1c1d1c; background: #2f3130; flex: none; }
.xy span { padding-left: 2px; }
.select { justify-content: space-between; padding-right: 5px; color: #c0c0c0; }
.check { width: 14px; height: 14px; border-radius: 3px; background: #666; border: 1px solid #1f201f; flex: none; position: relative; }
.check.on { background: #4a6cab; }
.check.on::after { content: ""; position: absolute; left: 3.500px; top: 1px; width: 4px; height: 7.500px; border: solid #fff; border-width: 0 2px 2px 0; transform: rotate(42deg); }
.slider { width: 133px; height: 2px; background: #555; position: relative; margin-left: 1px; flex: none; }
.slider i { position: absolute; width: 13px; height: 13px; top: -6px; left: calc(1px + 119px * var(--v)); background: #4a6cab; border: 1px solid #1f201f; border-radius: 50%; }

.section {
  height: 22px;
  border-top: 1px solid #1e1f1e;
  background: #353736;
  display: flex;
  align-items: center;
  padding-left: 9px;
  color: #a6a6a6;
}
.section.first { margin-top: 3px; }
.section .caret.side { margin-right: 9px; }
.section.body-sec { padding-left: 5px; border-bottom: 1px solid #1e1f1e; height: 23px; }
.body-sec .caret { margin-right: 5px; }
.sec-ic { width: 14px; height: 14px; margin: 0 5px; flex: none; }
.sec-menu { width: 9px; height: 11px; margin-left: auto; margin-right: 7px; color: #a0a0a0; }
.ri { width: 16px; height: 16px; margin-right: 9px; color: #b0b0b0; }
.plusi { width: 11px; height: 11px; margin-left: 5px; margin-right: 10px; color: #d0d0d0; }
.ri-first { margin-left: 2px; margin-right: 7px; }
.hexi { color: #a0a0a0; }
.shape { color: #7a7a7a; font-style: italic; }
.count { margin-left: 7px; color: #9a9a9a; }
.listi { width: 16px; height: 12px; margin-left: 7px; color: #a8a8a8; }
```
